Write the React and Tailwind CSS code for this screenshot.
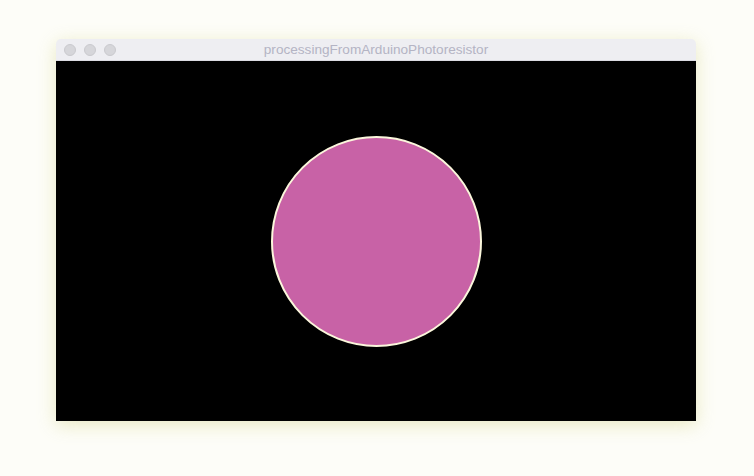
export default function App() {
  return (
    <div className="w-[754px] h-[476px] bg-[#fdfdf8] pt-[39px] pl-[56px] overflow-hidden">
      <div className="w-[640px] rounded-t-[5px] shadow-[0_4px_18px_rgba(210,210,130,0.45)] bg-[#eeeef2]">
        {/* title bar */}
        <div className="relative h-[22px] flex items-center justify-center border-b border-[#dcdce2] rounded-t-[5px]">
          <div className="absolute left-[8px] top-[5px] flex gap-[8px]">
            <span className="w-[12px] h-[12px] rounded-full bg-[#d6d6da] border border-[#cacace]" />
            <span className="w-[12px] h-[12px] rounded-full bg-[#d6d6da] border border-[#cacace]" />
            <span className="w-[12px] h-[12px] rounded-full bg-[#d6d6da] border border-[#cacace]" />
          </div>
          <span className="text-[13.6px] text-[#b4b4c4] font-['Liberation_Sans',Arial,sans-serif] leading-none">
            processingFromArduinoPhotoresistor
          </span>
        </div>
        {/* canvas */}
        <div className="h-[360px] bg-black flex items-center justify-center">
          <div className="w-[211px] h-[211px] rounded-full bg-[#c862a6] border-2 border-[#fbf6dc]" />
        </div>
      </div>
    </div>
  );
}
